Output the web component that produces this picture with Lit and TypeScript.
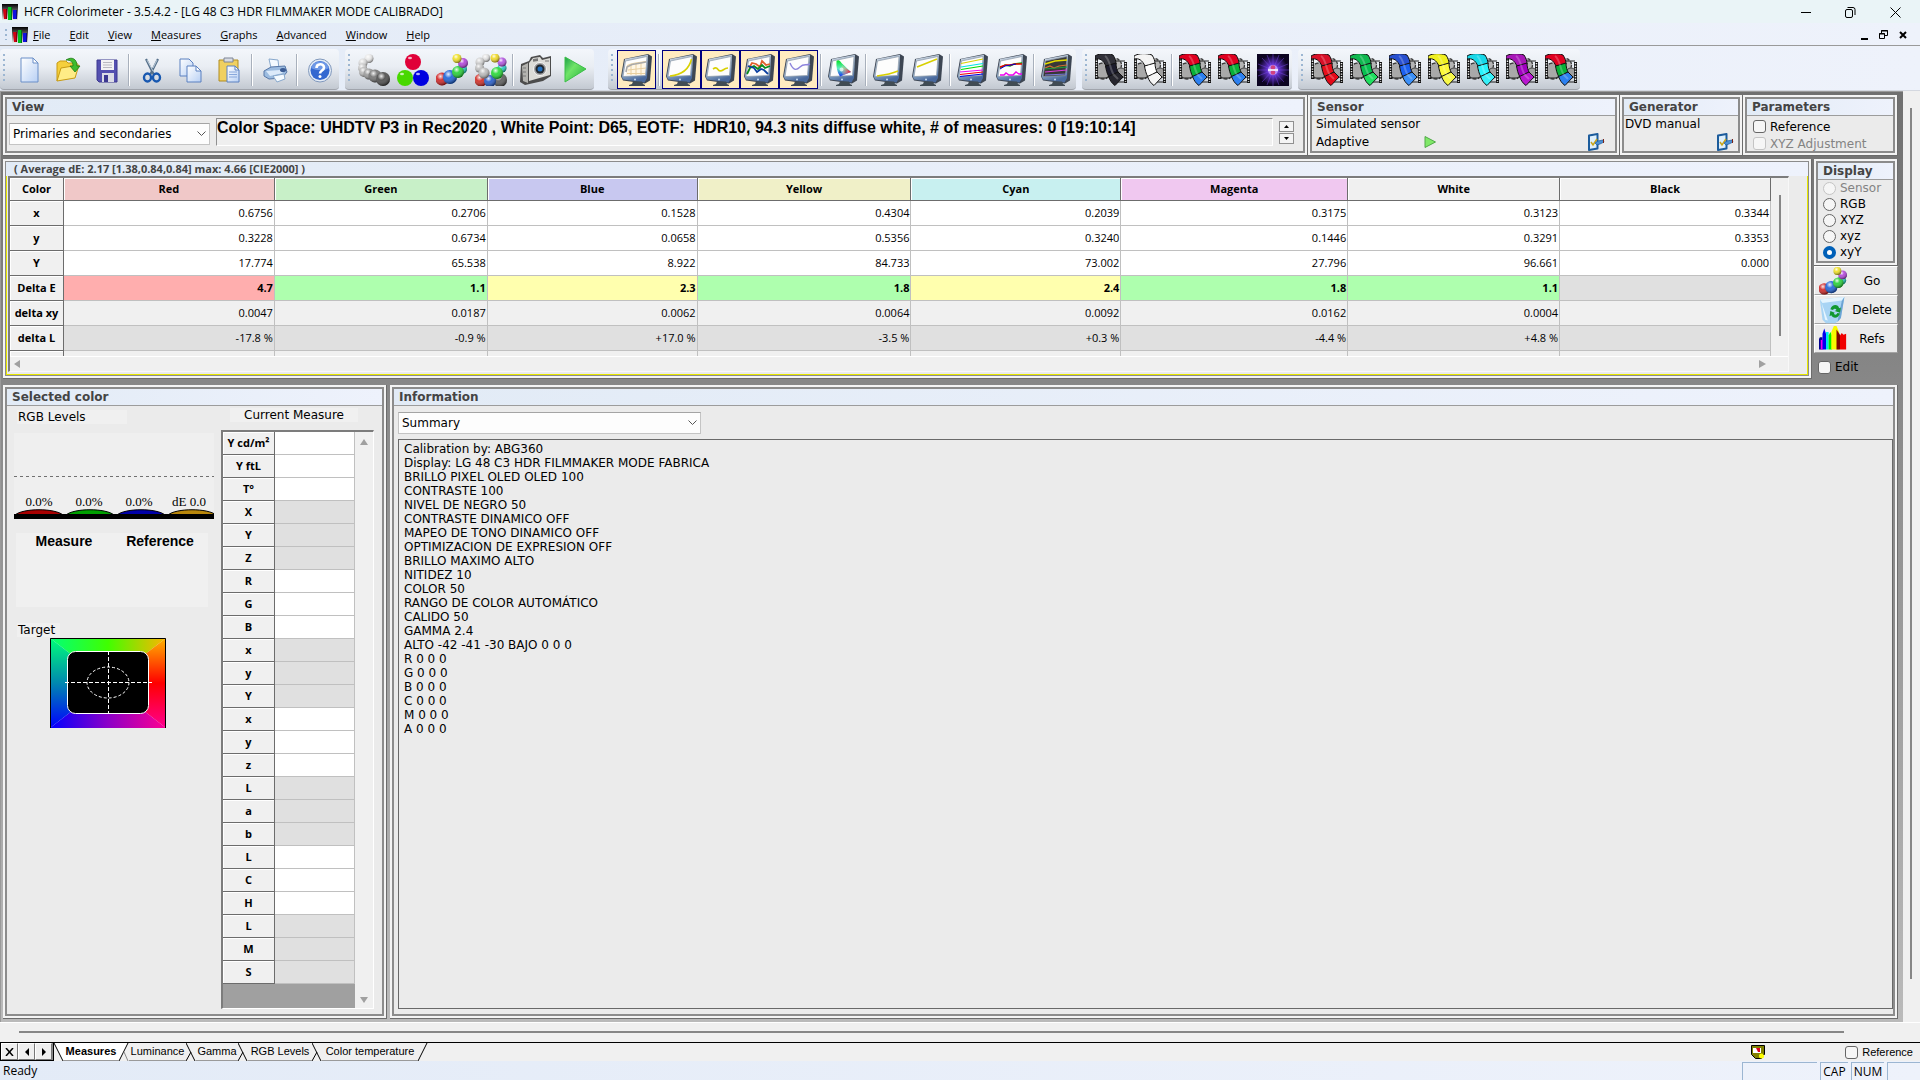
import { LitElement, html, svg, css, nothing } from 'lit';
import type { TemplateResult } from 'lit';
import { customElement, property, state } from 'lit/decorators.js';
import { classMap } from 'lit/directives/class-map.js';

interface Tool {
  id: string;
  label: string;
  active?: boolean;
  sep?: boolean;
}

interface GridColumn {
  name: string;
  tone: string;
  width: number;
  values: string[];
  grade: string;
}

const BANDS: { tools: Tool[]; wide?: boolean }[] = [
  {
    tools: [
      { id: 'new', label: 'New' },
      { id: 'open', label: 'Open' },
      { id: 'save', label: 'Save' },
      { id: 'cut', label: 'Cut', sep: true },
      { id: 'copy', label: 'Copy' },
      { id: 'paste', label: 'Paste' },
      { id: 'print', label: 'Print', sep: true },
      { id: 'help', label: 'About', sep: true },
    ],
  },
  {
    wide: true,
    tools: [
      { id: 'grays', label: 'Measure gray scale' },
      { id: 'primaries', label: 'Measure primaries' },
      { id: 'secondaries', label: 'Measure secondaries' },
      { id: 'ring', label: 'Measure all' },
      { id: 'camera', label: 'Capture', sep: true },
      { id: 'play', label: 'Continuous measures' },
    ],
  },
  {
    tools: [
      { id: 'm-grid', label: 'Measures', active: true },
      { id: 'm-lum', label: 'Luminance', active: true, sep: true },
      { id: 'm-gamma', label: 'Gamma', active: true },
      { id: 'm-rgb', label: 'RGB levels', active: true },
      { id: 'm-temp', label: 'Color temperature', active: true },
      { id: 'm-cie', label: 'CIE chart', sep: true },
      { id: 'm-near0', label: 'Near black', sep: true },
      { id: 'm-near100', label: 'Near white' },
      { id: 'm-sat', label: 'Saturation luminance', sep: true },
      { id: 'm-satshift', label: 'Saturation shift' },
      { id: 'm-free', label: 'Combined measures', sep: true },
    ],
  },
  {
    tools: [
      { id: 'f-black', label: 'Near black pattern' },
      { id: 'f-white', label: 'Near white pattern' },
      { id: 'f-rgb', label: 'Primaries pattern', sep: true },
      { id: 'f-rgb', label: 'Secondaries pattern' },
      { id: 'nova', label: 'Picture pattern' },
    ],
  },
  {
    tools: [
      { id: 'f-red', label: 'Red saturation' },
      { id: 'f-green', label: 'Green saturation' },
      { id: 'f-blue', label: 'Blue saturation' },
      { id: 'f-yellow', label: 'Yellow saturation' },
      { id: 'f-cyan', label: 'Cyan saturation' },
      { id: 'f-magenta', label: 'Magenta saturation' },
      { id: 'f-rgb', label: 'All saturations' },
    ],
  },
];

const MENUS = ['File', 'Edit', 'View', 'Measures', 'Graphs', 'Advanced', 'Window', 'Help'];

const ROWS = ['x', 'y', 'Y', 'Delta E', 'delta xy', 'delta L'];

const COLUMNS: GridColumn[] = [
  { name: 'Red', tone: '#f0c8c8', width: 211, grade: 'bad', values: ['0.6756', '0.3228', '17.774', '4.7', '0.0047', '-17.8 %'] },
  { name: 'Green', tone: '#c8f0c8', width: 213, grade: 'good', values: ['0.2706', '0.6734', '65.538', '1.1', '0.0187', '-0.9 %'] },
  { name: 'Blue', tone: '#c8c8f0', width: 210, grade: 'fair', values: ['0.1528', '0.0658', '8.922', '2.3', '0.0062', '+17.0 %'] },
  { name: 'Yellow', tone: '#f0f0c8', width: 214, grade: 'good', values: ['0.4304', '0.5356', '84.733', '1.8', '0.0064', '-3.5 %'] },
  { name: 'Cyan', tone: '#c8f0f0', width: 210, grade: 'fair', values: ['0.2039', '0.3240', '73.002', '2.4', '0.0092', '+0.3 %'] },
  { name: 'Magenta', tone: '#f0c8f0', width: 227, grade: 'good', values: ['0.3175', '0.1446', '27.796', '1.8', '0.0162', '-4.4 %'] },
  { name: 'White', tone: '#f0f0f0', width: 212, grade: 'good', values: ['0.3123', '0.3291', '96.661', '1.1', '0.0004', '+4.8 %'] },
  { name: 'Black', tone: '#f0f0f0', width: 211, grade: '', values: ['0.3344', '0.3353', '0.000', '', '', ''] },
];
const HEAD_WIDTH = 54;
const TOTAL_WIDTH = COLUMNS.reduce((sum, c) => sum + c.width, HEAD_WIDTH);

const CURRENT = ['Y cd/m²', 'Y ftL', 'T°', 'X', 'Y', 'Z', 'R', 'G', 'B', 'x', 'y', 'Y', 'x', 'y', 'z', 'L', 'a', 'b', 'L', 'C', 'H', 'L', 'M', 'S'];

const SUMMARY = [
  'Calibration by: ABG360',
  'Display: LG 48 C3 HDR FILMMAKER MODE FABRICA',
  'BRILLO PIXEL OLED OLED 100',
  'CONTRASTE 100',
  'NIVEL DE NEGRO 50',
  'CONTRASTE DINAMICO OFF',
  'MAPEO DE TONO DINAMICO OFF',
  'OPTIMIZACION DE EXPRESION OFF',
  'BRILLO MAXIMO ALTO',
  'NITIDEZ 10',
  'COLOR 50',
  'RANGO DE COLOR AUTOMÁTICO',
  'CALIDO 50',
  'GAMMA 2.4',
  'ALTO -42 -41 -30 BAJO 0 0 0',
  'R 0 0 0',
  'G 0 0 0',
  'B 0 0 0',
  'C 0 0 0',
  'M 0 0 0',
  'A 0 0 0',
].join('\n');

const TABS = [
  { name: 'Measures', width: 56 },
  { name: 'Luminance', width: 57 },
  { name: 'Gamma', width: 42 },
  { name: 'RGB Levels', width: 64 },
  { name: 'Color temperature', width: 96 },
];

const ball = (x: number, y: number, r: number, fill: string) => svg`
  <circle cx=${x} cy=${y} r=${r} fill=${fill}></circle>
  <circle cx=${x} cy=${y} r=${r} fill="url(#shine)"></circle>`;

const flat = (x: number, y: number, fill: string) => svg`
  <circle cx=${x} cy=${y} r="8" fill=${fill}></circle>
  <ellipse cx=${x - 3} cy=${y - 4} rx="2" ry="1.3" fill="#fff" opacity=".7"></ellipse>`;

const line = (d: string, stroke: string, width = 1.2) =>
  svg`<path d=${d} fill="none" stroke=${stroke} stroke-width=${width}></path>`;

const monitor = (content: unknown, screen = '#fdfdfd') => svg`
  <path d="M3 5 27 0l4 2.500-2 24-5 3-22-3-2-4z" fill="#3d4653"></path>
  <path d="M4 5 27 .8 26 24l-2.500 4.500L2 25.500.8 22.500z" fill="url(#case)"></path>
  <path d="M4.500 7 26 2.500 24.500 21.500 2 22.500z" fill=${screen} stroke="#8d99a8" stroke-width=".7"></path>
  <path d="M12 27.500h9l1 2.500 2 1v1H8v-1l3-1z" fill="#414c54"></path>
  <circle cx="14" cy="25.500" r="1" fill="#c9dcf0"></circle>
  ${content}`;

const SCREENS: Record<string, () => unknown> = {
  'm-grid': () => svg`
    <path d="M6 10 24 7v14H5z" fill="#fff6e4"></path>
    ${line('M6 12c4-3 10-3 19-4.500M7 16l18-2M6 19.500h18M10 10v11M15 9v12M20 8v13', '#e8cfa0', 1)}
    ${line('M5 18l1-5 5-2.500 6-1 8-1.500', '#a9a9a9', 1.6)}`,
  'm-lum': () => line('M4 22c10-1 19-6 21.500-17', '#d8d000', 1.6),
  'm-gamma': () => line('M8 15c3-2 4-1 5 .5s3 2 5 .5 3-2 5-2', '#d8d000', 1.6),
  'm-rgb': () => svg`
    ${line('M5 14l3-5 4 1 4 3 2-6 4 4 4-1', '#e0602c', 1.8)}
    ${line('M3 20l3-6 4-2 4 3 4-4 3 3 5-2', '#0a8a1c', 1.8)}
    ${line('M4 12l6 2 3 4 4-3 3 1 4 4', '#0b3fa0', 1.8)}`,
  'm-temp': () => line('M7 9c3 7 6 8 10 4s6-1 10-3', '#8d84dc', 1.4),
  'm-cie': () => svg`
    <path d="M8.500 7c2-2 4 0 5 2l9.500 9-11 4.500C9 18 8 12 8.500 7z" fill="url(#cie)"></path>
    <path d="M14 11l9 7-8 3-2-4z" fill="url(#cie-red)"></path>
    <circle cx="13.500" cy="15.500" r="2" fill="#fff" opacity=".7"></circle>`,
  'm-near0': () => line('M4 22c8-1 14-2 21-5', '#d8d000', 1.6),
  'm-near100': () => line('M5 13 25 5', '#d8d000', 1.6),
  'm-sat': () => svg`
    ${line('M4 9.500 26 5', '#d8d000')}${line('M4 13l22-3.500', '#00e4e4')}
    ${line('M4 15.500 26 12', '#00dc00')}${line('M3 18l23-2', '#f000f0')}
    ${line('M3 20.500 26 18', '#f00000')}${line('M3 22.500 26 20', '#0000e0')}`,
  'm-satshift': () => svg`
    ${line('M4 14l5-3 5 1 4-2 8-1', '#00b400', 1.4)}${line('M4 13l6-2 4 0 5-1 7 0', '#e80000', 1.4)}
    ${line('M4 15l5-3 6-1 5-1', '#0000d0', 1)}${line('M4 21l4 0 2-2 3 2 4 0 3-3 3 2 3 0', '#f000f0', 1.4)}`,
  'm-free': () => svg`
    ${line('M4 10l10-3 12-1', '#e4dc00', 1.5)}${line('M4 14l5-2 4 2 5-2 8-1', '#d07030', 1.2)}
    ${line('M4 15l22-2', '#1c9a3c', 1.2)}${line('M4 18l22-2', '#e03ce0', 1.2)}${line('M4 21l22-1', '#7878dc', 1.2)}`,
};

const film = (a: string, b: string, c: string) => svg`
  <circle cx="8" cy="17" r="8" fill="#a9a9a9" stroke="#3a3a3a" stroke-width="1.500" stroke-dasharray="4 1.500"></circle>
  <circle cx="20" cy="11" r="6.500" fill="#b5b5b5" stroke="#3a3a3a" stroke-width="1.300" stroke-dasharray="3 1.500"></circle>
  <circle cx="26" cy="19" r="5" fill="#a0a0a0" stroke="#444"></circle>
  <path d="M1.500 3v22M30.500 8v21" stroke="#111" stroke-width="3"></path>
  <path d="M1.500 4v20M30.500 9v19" stroke="#eee" stroke-width="1.500" stroke-dasharray="1.300 1.300"></path>
  <path d="M3 24h9M22 28h8M20 7h10" stroke="#222" stroke-width="1.200"></path>
  <path d="M0 2C5-1 12-1 18 1c2 3 3 6 3 9L11 12C8 6 5 4 0 5z" fill=${a} stroke="#111" stroke-width="1"></path>
  <path d="M21 9c0 4 1 7 2 9l-9 5c-2-3-3-8-3.500-11z" fill=${b} stroke="#111" stroke-width="1"></path>
  <path d="M23 18l5 5-8 8.500c-3-2-5-5-6.500-9z" fill=${c} stroke="#111" stroke-width="1"></path>
  <path d="M10 2c5 3 5 14 9 19l4 4" fill="none" stroke="#fff" stroke-width="2" opacity=".22"></path>`;

const FILMS: Record<string, [string, string, string]> = {
  'f-black': ['#303038', '#1c1c2c', '#26262e'],
  'f-white': ['#f4f4f4', '#ffffff', '#f4f4f4'],
  'f-rgb': ['#e00020', '#08b038', '#2c80f0'],
  'f-red': ['#d81028', '#e8101c', '#e40818'],
  'f-green': ['#10b850', '#08c050', '#20e060'],
  'f-blue': ['#2850d0', '#1c60f0', '#3c90f8'],
  'f-yellow': ['#f0f020', '#fcf838', '#f8f848'],
  'f-cyan': ['#18d8e8', '#28f4fc', '#38f0f8'],
  'f-magenta': ['#a818b8', '#a000c0', '#b818d0'],
};

const GLYPHS: Record<string, () => unknown> = {
  new: () => svg`
    <path d="M8 4h12l5 5v19H8z" fill="url(#sheet)" stroke="#6a8fc8"></path>
    <path d="M20 4v5h5z" fill="#fff" stroke="#6a8fc8"></path>`,
  open: () => svg`
    <path d="M5 27V9l3-2h6l2 2h9v5" fill="#f5cf3c" stroke="#c79a12"></path>
    <path d="M5 27l4-13 18-3-4 13z" fill="#ffec86" stroke="#c79a12"></path>
    <path d="M14 6c6-4 11-1 11 6h3l-5 6-5-6h3c0-4-2-6-7-6z" fill="#3ebc2e" stroke="#207a18" stroke-width=".8"></path>`,
  save: () => svg`
    <path d="M6 6h20v22H8l-2-2z" fill="#5450b0" stroke="#3c3890"></path>
    <path d="M10 6h13v10H10z" fill="#f2f2f4"></path>
    <path d="M12 8.500h9M12 11h9M12 13.500h9" stroke="#b8b8c0"></path>
    <path d="M11 19h12v9H11z" fill="#dcdce6"></path><path d="M13 21h4v7h-4z" fill="#3c3890"></path>`,
  cut: () => svg`
    <path d="M10 5l8 16M22 5l-8 16" stroke="#56708a" stroke-width="2.200"></path>
    <path d="M11 6l6 11M21 6l-4 8" stroke="#d4e2ee" stroke-width=".8"></path>
    <ellipse cx="11.500" cy="23.500" rx="3.500" ry="4" fill="none" stroke="#1858b0" stroke-width="2.400"></ellipse>
    <ellipse cx="20.500" cy="23.500" rx="3.500" ry="4" fill="none" stroke="#1858b0" stroke-width="2.400"></ellipse>`,
  copy: () => svg`
    <path d="M5 5h9l4 4v13H5z" fill="url(#sheet)" stroke="#5a80c0"></path>
    <path d="M12 12h9l5 5v11H12z" fill="url(#sheet)" stroke="#5a80c0"></path>
    <path d="M21 12v5h5z" fill="#fff" stroke="#5a80c0"></path>`,
  paste: () => svg`
    <path d="M5 6h19v21H5z" fill="#f0d060" stroke="#b08c20"></path>
    <path d="M10 4h9v4h-9z" fill="#d8dce4" stroke="#7c8494"></path>
    <path d="M13 12h8l4 4v12H13z" fill="url(#sheet)" stroke="#5a80c0"></path>
    <path d="M21 12v4h4z" fill="#fff" stroke="#5a80c0"></path>
    <path d="M15 18h8M15 20.500h8M15 23h8" stroke="#88a8dc"></path>`,
  print: () => svg`
    <path d="M10 5l9 1 1 9-8-1z" fill="#f4faff" stroke="#88a8cc"></path>
    <path d="M5 17l7-4 14-1 2 6-5 6-13 1-5-3z" fill="#9cbce0" stroke="#5878a8"></path>
    <path d="M7 17l14-1 3 3-13 3z" fill="#dceafa"></path>
    <path d="M14 22l11-2 1 5-8 3z" fill="#f4faff" stroke="#88a8cc"></path>
    <ellipse cx="24" cy="16" rx="3" ry="2" fill="#3c5c94"></ellipse>`,
  help: () => svg`
    <circle cx="16" cy="16.500" r="11.500" fill="#e4ecf6" stroke="#8098bc"></circle>
    <circle cx="16" cy="16.500" r="9.500" fill="#3468d0"></circle>
    <path d="M7 14a9.500 9.500 0 0 1 18 0c-5 3-12 3-18 0z" fill="#88acf0" opacity=".7"></path>
    <path d="M12.500 14c0-5 7.500-5 7.500-.5 0 3-4 3-4 6" fill="none" stroke="#fff" stroke-width="2.600"></path>
    <circle cx="16" cy="22.500" r="1.500" fill="#fff"></circle>`,
  grays: () => svg`
    ${ball(11, 4.500, 4.500, '#e8e8e8')}${ball(5, 9, 4.500, '#d8d8d8')}${ball(4.500, 14, 4.500, '#c8c8c8')}
    ${ball(6, 18, 5, '#b8b8b8')}${ball(11, 20, 5.500, '#989898')}${ball(17, 22, 6.500, '#707070')}${ball(25, 25, 7, '#484848')}`,
  primaries: () => svg`${flat(16, 8, '#e00038')}${flat(8, 24, '#48d800')}${flat(24, 24, '#0000e0')}`,
  secondaries: () => svg`
    ${ball(6, 25, 6.500, '#d02020')}${ball(14, 23, 7, '#1860d8')}${ball(26, 15, 5, '#20c8c0')}
    ${ball(22, 18, 6, '#20d030')}${ball(27, 9, 5, '#b040d8')}${ball(21, 4.500, 4.500, '#f0e020')}`,
  ring: () => svg`
    ${ball(11, 4, 4, '#e0e0e0')}${ball(5, 8, 4.500, '#d0d0d0')}${ball(4.500, 14, 4.500, '#c0c0c0')}
    ${ball(6, 26, 6.500, '#d02820')}${ball(25, 26, 7, '#585858')}${ball(15, 27, 6, '#2058c8')}
    ${ball(9, 19, 5.500, '#b8b8b8')}${ball(27, 14, 4.500, '#20c8c0')}${ball(22, 19, 6, '#20d830')}
    ${ball(27, 8, 4.500, '#b050e0')}${ball(20, 4, 4.500, '#f0d820')}`,
  camera: () => svg`
    <path d="M1 10 9 7l2-4 9-2 3 3 8-2v20l-8 5-18 4-5-3z" fill="#4c4c4c"></path>
    <path d="M9 9l4-5 7-1 2 3 8-2v17l-21 6z" fill="#dcdcd8"></path>
    <path d="M2 12l6-3v20l-5-2z" fill="#b4b4b0"></path>
    <path d="M13 5l5-.8V7l-5 .8z" fill="#777"></path>
    <circle cx="20" cy="15" r="6.500" fill="#9c9c9c" stroke="#f4f4f4"></circle>
    <circle cx="20" cy="15" r="4.500" fill="#202830"></circle>
    <circle cx="20" cy="15" r="2.500" fill="#2070c0"></circle>
    <path d="M25 7h4M3 14h3M3 18h3M3 22h3" stroke="#777" stroke-width="1.200"></path>`,
  play: () => svg`<path d="M6 3 27 15 6 28z" fill="url(#leaf)" stroke="#3cc048" stroke-width="1"></path>`,
  nova: () => svg`
    <path d="M0 0h32v32H0z" fill="#0c0420"></path>
    <circle cx="16" cy="16" r="15" fill="url(#glow)"></circle>
    <path d="M16 0v32M0 16h32M5 4l22 24M27 4 5 28M10 1l12 30M22 1 10 31M1 10l30 12M31 10 1 22" stroke="#7a48e8" stroke-width=".7" opacity=".7"></path>
    <circle cx="16" cy="16" r="5" fill="#b890ff"></circle>
    <circle cx="16" cy="13.500" r="2.300" fill="#d04080"></circle><circle cx="16" cy="18.500" r="2.300" fill="#d04080"></circle>
    <path d="M11 16h10" stroke="#fff" stroke-width="1.500"></path>`,
  bin: () => svg`
    <path d="M1 4l28-3-4 24-6 6H8l-4-4z" fill="#a8d4f4"></path>
    <path d="M1 4l28-3-3 4-22 3z" fill="#e4f4fe"></path>
    <path d="M3 8l7 20-3-1z" fill="#e8f6ff"></path><path d="M26 6l-5 24 4-5 4-24z" fill="#6ca4d4"></path>
    <path d="M13 15c2-6 9-6 10-1l2-1-1 6-6-2 2-1c-1-2-3-2-4 0zM24 20c-2 6-8 6-10 2l-2 1 1-6 5 2-1 1c1 2 3 2 4-.500z" fill="#109830"></path>`,
  refs: () => svg`
    <path d="M0 28V16l1-2h3v14z" fill="#000090"></path><path d="M2 28V17h3v11z" fill="#f000f0"></path>
    <path d="M4 28V10l2-6 2 6v18z" fill="#0000f0"></path><path d="M8 28V8h3v20z" fill="#00e8f0"></path>
    <path d="M11 28V12l2-4 2 4v16z" fill="#00f000"></path><path d="M14 28V8l3-7h3l3 7v20z" fill="#f8f800"></path>
    <path d="M20 28V5l4 6v17z" fill="#800000"></path><path d="M24 28V12l2-3 2 2 3-1v18z" fill="#f00000"></path>`,
};

const icon = (id: string): TemplateResult => {
  let body: unknown;
  if (FILMS[id]) body = film(...FILMS[id]);
  else if (SCREENS[id]) body = monitor(SCREENS[id](), id === 'm-free' ? '#383838' : '#fdfdfd');
  else body = GLYPHS[id]?.() ?? nothing;
  return html`<svg viewBox="0 0 32 32" width="32" height="32" aria-hidden="true">${body}</svg>`;
};

const logo = html`
  <svg viewBox="0 0 16 16" width="16" height="16" aria-hidden="true">
    <path d="M0 0h16v16H0z" fill="url(#fade)"></path>
    <path d="M1 5h4v10H2z" fill="#d00010"></path><path d="M6 3h4v13H6z" fill="#00c020"></path><path d="M11 6h4v9h-4z" fill="#1010e0"></path>
    <path d="M4 5h1v10H4zM9 3h1v13H9zM14 6h1v9h-1z" fill="#000" opacity=".4"></path>
  </svg>`;

const settingsGlyph = html`
  <svg viewBox="0 0 18 18" width="18" height="18" aria-hidden="true">
    <path d="M2 2.500 10.500 1v14.500L2 17z" fill="#dff0fc" stroke="#1c5c9c" stroke-width="2" stroke-linejoin="round"></path>
    <path d="M4 9l2 3 4-6" fill="none" stroke="#c8a418" stroke-width="1.500"></path>
    <path d="M8 10l3-2 5-1 1 2-4 2-3 1z" fill="#4c90d4" stroke="#1c5c9c" stroke-width=".7"></path>
    <path d="M16 6h1v4h-1z" fill="#7c2418"></path>
  </svg>`;

@customElement('hcfr-panel')
class HcfrPanel extends LitElement {
  static styles = css`
    :host {
      display: flex;
      box-sizing: border-box;
      padding: 2px;
      background: #f4f4f4;
      border-right: 1px solid #6c6c6c;
      border-bottom: 1px solid #6c6c6c;
      min-width: 0;
    }
    .frame {
      flex: 1;
      min-width: 0;
      display: flex;
      flex-direction: column;
      border: 2px solid #8c8c8c;
      background: #ebebeb;
    }
    .title {
      height: 16px;
      padding-left: 5px;
      white-space: nowrap;
      font: bold 12px/16px 'DejaVu Sans', sans-serif;
      color: #444;
      background: linear-gradient(90deg, #e2ebf6, #eef2fc);
      border-bottom: 1px solid #9c9c9c;
    }
    .body {
      flex: 1;
      min-height: 0;
      display: flex;
      flex-direction: column;
    }
    .lit {
      border-width: 1px;
    }
    .lit .title {
      font: bold 11px/14px 'Open Sans', sans-serif;
      padding-left: 8px;
      border-bottom: 0;
      height: 14px;
    }
    .lit .body {
      border: 1px solid #e6e600;
      border-top: 0;
    }
  `;

  @property() heading = '';
  @property({ type: Boolean }) highlight = false;

  render() {
    return html`
      <section class=${classMap({ frame: true, lit: this.highlight })}>
        <div class="title">${this.heading}</div>
        <div class="body"><slot></slot></div>
      </section>
    `;
  }
}

@customElement('app-root')
class AppRoot extends LitElement {
  static styles = css`
    :host {
      display: flex;
      flex-direction: column;
      height: 100vh;
      min-height: 700px;
      box-sizing: border-box;
      overflow: hidden;
      background: #eef2fb;
      color: #000;
      font: 12px/14px 'DejaVu Sans', sans-serif;
    }
    * {
      box-sizing: border-box;
    }
    button, select, textarea, input {
      font: inherit;
      color: inherit;
      margin: 0;
      padding: 0;
      border: 0;
      border-radius: 0;
      background: none;
    }
    button, select {
      appearance: none;
      white-space: nowrap;
    }
    svg {
      display: block;
      flex: none;
    }
    .defs {
      position: absolute;
    }

    .titlebar {
      display: flex;
      align-items: center;
      gap: 6px;
      height: 23px;
      flex: none;
      padding: 1px 5px 0 2px;
      background: #eaf4f7;
      font: 12px/16px 'Open Sans', sans-serif;
    }
    .titlebar .name {
      flex: 1;
    }
    .titlebar button, .menubar .child {
      display: flex;
      align-items: center;
      justify-content: center;
    }
    .titlebar button {
      width: 39px;
      height: 20px;
    }
    .menubar {
      display: flex;
      align-items: center;
      height: 23px;
      flex: none;
      padding: 1px 8px 0 5px;
      border-bottom: 1px solid #9a9a9a;
      background: linear-gradient(90deg, #e3ebf7, #eef2fb);
      font: 11px/16px 'Open Sans', sans-serif;
    }
    .menubar nav {
      flex: 1;
      display: flex;
      gap: 19px;
      padding-left: 5px;
    }
    .menubar .child {
      width: 19px;
      height: 18px;
    }
    .grip {
      width: 2px;
      align-self: stretch;
      flex: none;
      background: repeating-linear-gradient(#9cb6d2 0 2px, transparent 2px 5px);
    }
    .menubar .grip {
      margin: 5px 5px 5px 0;
    }

    .toolbars {
      display: flex;
      gap: 6px;
      height: 45px;
      flex: none;
      padding-top: 3px;
      border-bottom: 1px solid #d4d8e0;
      background: linear-gradient(90deg, #e3ebf7, #eef2fb);
    }
    .band {
      display: flex;
      align-items: center;
      padding: 1px 0 0 3px;
      border-radius: 4px;
      border-bottom: 1px solid #a0a4ac;
      background: linear-gradient(#f3f6fb, #e9edf3 45%, #c3c9d2);
    }
    .band.wide {
      margin-right: 8px;
    }
    .band .grip {
      margin: 4px 4px 5px 0;
    }
    .tool {
      display: flex;
      align-items: center;
      justify-content: center;
      width: 39px;
      height: 39px;
    }
    .tool.active {
      background: #ffebc0;
      border: 1px solid #000080;
    }
    .sep {
      width: 2px;
      height: 32px;
      margin: 0 2px;
      border-left: 1px solid #a8b0bc;
      border-right: 1px solid #fff;
    }

    .workspace {
      display: flex;
      flex: 1;
      min-height: 0;
    }
    .view {
      flex: 1;
      min-width: 0;
      display: flex;
      flex-direction: column;
      padding: 3px 5px 3px 2px;
      border-top: 1px solid #9a9a9a;
      border-left: 1px solid #9a9a9a;
      background: linear-gradient(#707070, #bababa);
    }
    .vscroll {
      width: 17px;
      padding: 17px 7px 43px;
      background: #f0f0f0;
    }
    .vscroll div {
      width: 2px;
      height: 100%;
      background: #868686;
    }
    .row {
      display: flex;
    }
    .top {
      height: 61px;
      flex: none;
      margin-bottom: 3px;
    }
    .middle {
      height: 220px;
      flex: none;
      gap: 2px;
      margin-bottom: 6px;
    }
    .bottom {
      flex: 1;
      gap: 3px;
      min-height: 0;
    }
    .grow {
      flex: 1;
    }
    .sensor {
      width: 312px;
    }
    .generator {
      width: 123px;
    }
    .parameters {
      width: 155px;
    }

    .combo {
      position: relative;
      display: block;
      height: 22px;
    }
    .combo select {
      width: 100%;
      height: 22px;
      padding-left: 3px;
      background: #fdfdfd;
      border: 1px solid #c4c4c4;
      border-top-color: #a4a4a4;
    }
    .combo svg {
      position: absolute;
      right: 4px;
      top: 8px;
      pointer-events: none;
    }
    .viewbar {
      display: flex;
      padding: 2px 9px 0 2px;
      gap: 6px;
    }
    .viewbar .combo {
      width: 201px;
      margin-top: 5px;
    }
    .status-text {
      flex: 1;
      height: 28px;
      resize: none;
      overflow: hidden;
      border: 1px solid #fff;
      border-top-color: #909090;
      border-left-color: #909090;
      background: #efefef;
      font: bold 16px/18px 'Liberation Sans', Arial, sans-serif;
    }
    .spin {
      display: flex;
      flex-direction: column;
      gap: 1px;
      margin-top: 3px;
    }
    .spin button {
      width: 15px;
      height: 11px;
      display: flex;
      align-items: center;
      justify-content: center;
      border: 1px solid #909090;
      background: #f4f4f4;
    }
    .lines {
      display: grid;
      grid-template-columns: 1fr auto;
      padding: 0 10px 0 4px;
      line-height: 17px;
    }
    .generator .lines {
      padding: 0 4px 0 1px;
    }
    .lines .mode {
      display: flex;
      align-items: center;
      gap: 55px;
    }
    .check {
      display: flex;
      align-items: center;
      gap: 4px;
    }
    .check input {
      appearance: none;
      flex: none;
      width: 13px;
      height: 13px;
      border: 1px solid #666;
      border-radius: 3px;
      background: #f6f6f6;
    }
    .check input[type='radio'] {
      border-radius: 50%;
    }
    .check input[type='radio']:checked {
      border: 4px solid #0060b8;
      background: #fff;
    }
    .off {
      color: #838383;
    }
    .off input {
      border-color: #c4c4c4;
    }
    .options {
      padding: 2px 0 0 6px;
    }
    .options .check {
      height: 17px;
    }
    .modes {
      padding-left: 5px;
    }
    .modes .check {
      height: 16px;
    }

    .measures {
      flex: 1;
      margin: 0 18px 2px 1px;
      display: flex;
      flex-direction: column;
      border: 1px solid #f8f8f8;
      border-top: 2px solid #7c7c7c;
      border-left: 2px solid #7c7c7c;
      background: #f0f0f0;
      min-height: 0;
    }
    .gridrow {
      display: flex;
      align-items: flex-start;
      height: 178px;
      overflow: hidden;
    }
    table {
      border-collapse: separate;
      border-spacing: 0;
      table-layout: fixed;
    }
    .gridrow table {
      flex: 1;
      min-width: 0;
    }
    .rail {
      width: 17px;
      height: 178px;
      padding: 17px 7px 20px 8px;
      flex: none;
    }
    .rail div {
      width: 2px;
      height: 100%;
      background: #868686;
    }
    th {
      background: #f0f0f0;
      font: bold 11px/16px 'Open Sans', sans-serif;
      padding: 0;
      border-right: 1px solid #6c6c6c;
      border-bottom: 1px solid #6c6c6c;
      box-shadow: inset 1px 1px #fff;
    }
    td {
      padding: 0 1px 0 0;
      text-align: right;
      font: 11px/16px 'Open Sans', sans-serif;
      background: #fff;
      border-right: 1px solid #c0c0c0;
      border-bottom: 1px solid #c0c0c0;
    }
    .gridrow tr {
      height: 25px;
    }
    .gridrow thead tr {
      height: 23px;
    }
    tr.mark td {
      font-weight: bold;
    }
    td.bad { background: #ffaeae; }
    td.good { background: #aeffae; }
    td.fair { background: #ffffae; }
    tr.soft td { background: #f0f0f0; }
    tr.dim td, td.none, .current td.dim { background: #e0e0e0; }
    .hscroll {
      flex: 1;
      display: flex;
      align-items: center;
      justify-content: space-between;
      padding: 0 22px 0 4px;
      border-top: 1px solid #fff;
    }

    .side {
      width: 84px;
      flex: none;
      display: flex;
      flex-direction: column;
    }
    .side hcfr-panel {
      height: 107px;
      flex: none;
    }
    .action {
      display: flex;
      align-items: center;
      height: 29px;
      padding-left: 4px;
      background: #ebebeb;
      border: 1px solid #fff;
      border-right-color: #8c8c8c;
      border-bottom-color: #a4a4a4;
    }
    .action span {
      flex: 1;
      text-align: center;
    }
    .side .edit {
      padding: 7px 0 0 4px;
    }

    .selected {
      width: 384px;
      flex: none;
    }
    .info {
      flex: 1;
    }
    .selbody {
      flex: 1;
      min-height: 0;
      display: flex;
      gap: 7px;
      padding: 2px 8px 5px 7px;
    }
    .left {
      width: 200px;
    }
    .tag {
      background: #f0f0f0;
      height: 14px;
      margin-left: 3px;
      padding-left: 1px;
    }
    .tag.levels {
      width: 110px;
      margin-top: 2px;
      margin-bottom: 9px;
    }
    .tag.target {
      width: 43px;
      margin-top: 16px;
      margin-bottom: 1px;
    }
    .swatches {
      display: grid;
      grid-template-columns: 1fr 1fr;
      text-align: center;
      height: 74px;
      width: 192px;
      margin: 14px 2px 0;
      background: #f0f0f0;
      font: bold 14px/16px 'Liberation Sans', Arial, sans-serif;
    }
    .levelbox {
      height: 86px;
      background: #efefef;
      display: flex;
      flex-direction: column;
      justify-content: flex-end;
    }
    .guide {
      height: 1px;
      margin-bottom: 18px;
      background: repeating-linear-gradient(90deg, #707070 0 3px, transparent 3px 6px);
    }
    .percents {
      display: grid;
      grid-template-columns: repeat(4, 1fr);
      margin-bottom: 1px;
      text-align: center;
      font: 13px/13px 'Liberation Serif', serif;
    }
    .gamut {
      margin-left: 36px;
    }
    .right {
      flex: 1;
      min-height: 0;
      display: flex;
      flex-direction: column;
    }
    .right .caption {
      width: 128px;
      height: 14px;
      margin: 0 0 8px 9px;
      text-align: center;
      background: #f0f0f0;
    }
    .current {
      flex: 1;
      min-height: 0;
      display: flex;
      border: 1px solid #fff;
      border-top: 2px solid #7c7c7c;
      border-left: 2px solid #7c7c7c;
      background: #a0a0a0;
    }
    .current table {
      width: 132px;
      height: 552px;
      flex: none;
    }
    .current tr {
      height: 23px;
    }
    .current th {
      width: 52px;
    }
    .current .arrows {
      flex: 1;
      display: flex;
      flex-direction: column;
      align-items: center;
      justify-content: space-between;
      padding: 7px 0 5px;
      background: #f0f0f0;
    }

    .infobody {
      flex: 1;
      display: flex;
      flex-direction: column;
      gap: 5px;
      padding: 6px 0 5px 4px;
    }
    .infobody .combo {
      width: 303px;
    }
    .infobody textarea {
      flex: 1;
      resize: none;
      padding: 2px 5px;
      border: 1px solid #696969;
      background: #ebebeb;
    }

    .hbar {
      height: 20px;
      flex: none;
      padding: 8px 76px 0 19px;
      background: #f0f0f0;
      border-top: 1px solid #fff;
    }
    .hbar div {
      height: 2px;
      background: #868686;
    }
    .tabs {
      height: 19px;
      flex: none;
      display: flex;
      border-top: 1px solid #000;
      background: #f0f0f0;
      font: 11px/17px 'Liberation Sans', Arial, sans-serif;
    }
    .navs {
      display: flex;
      padding-right: 1px;
      border: 1px solid #000;
      border-top: 0;
      background: #888;
    }
    .navs button {
      width: 17px;
      display: flex;
      align-items: center;
      justify-content: center;
      background: #efefef;
      border: 1px solid #fff;
      border-right-color: #777;
      border-bottom-color: #777;
    }
    .tab {
      border-bottom: 1px solid #9a9a9a;
    }
    .tab.current-tab {
      font-weight: bold;
      background: #fff;
    }
    .tabs .grow {
      display: flex;
      justify-content: flex-end;
      align-items: center;
      gap: 80px;
      padding-right: 7px;
    }
    .statusbar {
      display: flex;
      align-items: stretch;
      gap: 3px;
      height: 19px;
      flex: none;
      padding: 1px 0 0 3px;
      background: linear-gradient(90deg, #e3ebf7, #eef2fb);
      font: 12px/18px 'Open Sans', sans-serif;
    }
    .pane {
      border-left: 1px solid #9cb6d2;
      border-top: 1px solid #9cb6d2;
      text-align: center;
      line-height: 17px;
      width: 33px;
    }
    .pane.long {
      width: 75px;
    }
    .pane.short {
      width: 28px;
    }
  `;

  @state() private _display = 'xyY';
  @state() private _tab = 'Measures';

  render() {
    return html`
      ${this._defs()}
      <header class="titlebar">
        ${logo}
        <span class="name">HCFR Colorimeter - 3.5.4.2 - [LG 48 C3 HDR FILMMAKER MODE CALIBRADO]</span>
        <button aria-label="Minimize"><svg width="10" height="10"><path d="M0 5.500h10" stroke="#000"></path></svg></button>
        <button aria-label="Restore"><svg width="11" height="11" fill="none" stroke="#000"><rect x=".5" y="2.500" width="7" height="8" rx="1.500"></rect><path d="M2.500.5h5.500q2 0 2 2V8"></path></svg></button>
        <button aria-label="Close"><svg width="11" height="11"><path d="M.5.5l10 10M10.500.5l-10 10" stroke="#000"></path></svg></button>
      </header>
      <div class="menubar">
        <span class="grip"></span>
        ${logo}
        <nav>${MENUS.map(m => html`<button><u>${m[0]}</u>${m.slice(1)}</button>`)}</nav>
        <button class="child" aria-label="Minimize document"><svg width="8" height="10"><path d="M0 9h7" stroke="#000" stroke-width="2"></path></svg></button>
        <button class="child" aria-label="Restore document"><svg width="9" height="9" fill="none" stroke="#000"><path d="M2.500 3V.5h6v5H6M2 1h7M0 4h6"></path><path d="M.5 3.500h5v5h-5z"></path></svg></button>
        <button class="child" aria-label="Close document"><svg width="8" height="8"><path d="M1 1l6 6M7 1 1 7" stroke="#000" stroke-width="2"></path></svg></button>
      </div>
      <div class="toolbars">
        ${BANDS.map(band => html`
          <div class=${classMap({ band: true, wide: !!band.wide })}>
            <span class="grip"></span>
            ${band.tools.map(t => html`
              ${t.sep ? html`<span class="sep"></span>` : nothing}
              <button class=${classMap({ tool: true, active: !!t.active })} aria-label=${t.label}>${icon(t.id)}</button>
            `)}
          </div>
        `)}
      </div>
      <main class="workspace">
        <div class="view">
          ${this._renderTop()}
          ${this._renderMiddle()}
          <div class="row bottom">
            ${this._renderSelected()}
            <hcfr-panel class="info" heading="Information">
              <div class="infobody">
                ${this._combo('Information page', 'Summary')}
                <textarea aria-label="Summary" readonly .value=${SUMMARY}></textarea>
              </div>
            </hcfr-panel>
          </div>
        </div>
        <div class="vscroll"><div></div></div>
      </main>
      <div class="hbar"><div></div></div>
      ${this._renderTabs()}
      <footer class="statusbar">
        <span class="grow">Ready</span>
        <span class="pane long"></span>
        <span class="pane short">CAP</span>
        <span class="pane">NUM</span>
        <span class="pane"></span>
      </footer>
    `;
  }

  private _defs() {
    return html`
      <svg class="defs" width="0" height="0" aria-hidden="true">
        <defs>
          <radialGradient id="shine" cx=".38" cy=".3" r=".7">
            <stop offset="0" stop-color="#fff" stop-opacity=".9"></stop>
            <stop offset=".4" stop-color="#fff" stop-opacity=".1"></stop>
            <stop offset="1" stop-color="#000" stop-opacity=".5"></stop>
          </radialGradient>
          <radialGradient id="glow">
            <stop offset="0" stop-color="#e0c8ff"></stop>
            <stop offset=".4" stop-color="#6030c8"></stop>
            <stop offset="1" stop-color="#0c0420"></stop>
          </radialGradient>
          <linearGradient id="case" x1="0" y1="0" x2=".3" y2="1">
            <stop offset="0" stop-color="#d4dae2"></stop>
            <stop offset=".7" stop-color="#88a4c4"></stop>
            <stop offset="1" stop-color="#48689c"></stop>
          </linearGradient>
          <linearGradient id="cie" x1="0" y1="0" x2="0" y2="1">
            <stop offset="0" stop-color="#00e020"></stop>
            <stop offset=".5" stop-color="#60f0c0"></stop>
            <stop offset="1" stop-color="#1830f0"></stop>
          </linearGradient>
          <linearGradient id="cie-red">
            <stop offset="0" stop-color="#ffe0a0" stop-opacity=".2"></stop>
            <stop offset="1" stop-color="#f00020"></stop>
          </linearGradient>
          <linearGradient id="sheet" x1="0" y1="0" x2="1" y2="1">
            <stop offset="0" stop-color="#fff"></stop>
            <stop offset="1" stop-color="#b8d0f4"></stop>
          </linearGradient>
          <linearGradient id="leaf" x1="0" y1="0" x2="1" y2="1">
            <stop offset="0" stop-color="#1ca048"></stop>
            <stop offset=".4" stop-color="#70e468"></stop>
            <stop offset="1" stop-color="#20b038"></stop>
          </linearGradient>
          <linearGradient id="fade" x1="0" y1="0" x2="0" y2="1">
            <stop offset="0" stop-color="#000"></stop>
            <stop offset="1" stop-color="#e8e8e8"></stop>
          </linearGradient>
        </defs>
      </svg>
    `;
  }

  private _combo(label: string, value: string) {
    return html`
      <label class="combo">
        <select aria-label=${label}><option>${value}</option></select>
        <svg width="9" height="6"><path d="M.5 .5l4 4 4-4" fill="none" stroke="#555"></path></svg>
      </label>
    `;
  }

  private _renderTop() {
    return html`
      <div class="row top">
        <hcfr-panel class="grow" heading="View">
          <div class="viewbar">
            ${this._combo('View', 'Primaries and secondaries')}
            <textarea class="status-text" aria-label="Measure settings" readonly
              .value=${'Color Space: UHDTV P3 in Rec2020 , White Point: D65, EOTF:  HDR10, 94.3 nits diffuse white, # of measures: 0 [19:10:14]'}></textarea>
            <div class="spin">
              <button aria-label="Scroll up"><svg width="5" height="3"><path d="M0 3h5L2.500 0z"></path></svg></button>
              <button aria-label="Scroll down"><svg width="5" height="3"><path d="M0 0h5L2.500 3z"></path></svg></button>
            </div>
          </div>
        </hcfr-panel>
        <hcfr-panel class="sensor" heading="Sensor">
          <div class="lines">
            <span>Simulated sensor</span><span></span>
            <span class="mode">Adaptive
              <svg width="12" height="12"><path d="M1 0.500 11.500 6 1 11.500z" fill="#80e868" stroke="#50a848"></path></svg>
            </span>
            <button aria-label="Configure sensor">${settingsGlyph}</button>
          </div>
        </hcfr-panel>
        <hcfr-panel class="generator" heading="Generator">
          <div class="lines">
            <span>DVD manual</span><span></span>
            <span></span>
            <button aria-label="Configure generator">${settingsGlyph}</button>
          </div>
        </hcfr-panel>
        <hcfr-panel class="parameters" heading="Parameters">
          <div class="options">
            <label class="check"><input type="checkbox" />Reference</label>
            <label class="check off"><input type="checkbox" disabled />XYZ Adjustment</label>
          </div>
        </hcfr-panel>
      </div>
    `;
  }

  private _renderMiddle() {
    const pct = (w: number) => `width: ${(w / TOTAL_WIDTH) * 100}%`;
    return html`
      <div class="row middle">
        <hcfr-panel class="grow" highlight heading="( Average dE: 2.17 [1.38,0.84,0.84] max: 4.66 [CIE2000] )">
          <div class="measures">
            <div class="gridrow">
              <table>
                <colgroup>
                  <col style=${pct(HEAD_WIDTH)} />
                  ${COLUMNS.map(c => html`<col style=${pct(c.width)} />`)}
                </colgroup>
                <thead>
                  <tr>
                    <th>Color</th>
                    ${COLUMNS.map(c => html`<th style=${`background: ${c.tone}`}>${c.name}</th>`)}
                  </tr>
                </thead>
                <tbody>
                  ${ROWS.map((r, i) => html`
                    <tr class=${classMap({ mark: i === 3, soft: i === 4, dim: i === 5 })}>
                      <th>${r}</th>
                      ${COLUMNS.map(c => html`<td class=${i === 3 ? c.grade || 'none' : ''}>${c.values[i]}</td>`)}
                    </tr>
                  `)}
                  <tr class="soft"><th></th>${COLUMNS.map(() => html`<td></td>`)}</tr>
                </tbody>
              </table>
              <div class="rail"><div></div></div>
            </div>
            <div class="hscroll">
              <svg width="6" height="8"><path d="M6 0v8L0 4z" fill="#a0a0a0"></path></svg>
              <svg width="7" height="8"><path d="M0 0v8l7-4z" fill="#a0a0a0"></path></svg>
            </div>
          </div>
        </hcfr-panel>
        <div class="side">
          <hcfr-panel heading="Display">
            <div class="modes">
              ${['Sensor', 'RGB', 'XYZ', 'xyz', 'xyY'].map(d => html`
                <label class=${classMap({ check: true, off: d === 'Sensor' })}>
                  <input type="radio" name="display" .checked=${this._display === d} ?disabled=${d === 'Sensor'}
                         @change=${() => (this._display = d)} />${d}
                </label>
              `)}
            </div>
          </hcfr-panel>
          <button class="action">${this._small('secondaries')}<span>Go</span></button>
          <button class="action">${this._small('bin')}<span>Delete</span></button>
          <button class="action">${this._small('refs')}<span>Refs</span></button>
          <label class="check edit"><input type="checkbox" />Edit</label>
        </div>
      </div>
    `;
  }

  private _small(id: string) {
    return html`<svg viewBox="0 0 32 32" width="28" height="28" aria-hidden="true">${GLYPHS[id]()}</svg>`;
  }

  private _renderSelected() {
    const bumps = ['#a80000', '#00a000', '#0000a8', '#b8860b'];
    return html`
      <hcfr-panel class="selected" heading="Selected color">
        <div class="selbody">
          <div class="left">
            <div class="tag levels">RGB Levels</div>
            <div class="levelbox">
              <div class="guide"></div>
              <div class="percents"><span>0.0%</span><span>0.0%</span><span>0.0%</span><span>dE 0.0</span></div>
              <svg width="200" height="10" viewBox="0 0 200 10">
                ${bumps.map((c, i) => svg`<path d=${`M${i * 51 + 1} 6c8-7 40-7 48 0z`} fill=${c} stroke="#000"></path>`)}
                <path d="M0 5h200v5H0z"></path>
              </svg>
            </div>
            <div class="swatches"><span>Measure</span><span>Reference</span></div>
            <div class="tag target">Target</div>
            ${this._gamut()}
          </div>
          <div class="right">
            <div class="caption">Current Measure</div>
            <div class="current">
              <table>
                <tbody>
                  ${CURRENT.map((c, i) => html`<tr><th>${c}</th><td class=${Math.floor(i / 3) % 2 ? 'dim' : ''}></td></tr>`)}
                </tbody>
              </table>
              <div class="arrows">
                <svg width="8" height="6"><path d="M4 0l4 6H0z" fill="#a0a0a0"></path></svg>
                <svg width="8" height="6"><path d="M4 6l4-6H0z" fill="#a0a0a0"></path></svg>
              </div>
            </div>
          </div>
        </div>
      </hcfr-panel>
    `;
  }

  private _gamut() {
    return html`
      <svg class="gamut" width="116" height="90" viewBox="0 0 116 90">
        <defs>
          <linearGradient id="g-top"><stop offset="0" stop-color="#00ff78"></stop><stop offset=".5" stop-color="#40ff00"></stop><stop offset="1" stop-color="#ffb400"></stop></linearGradient>
          <linearGradient id="g-right" x2="0" y2="1"><stop offset="0" stop-color="#ffb400"></stop><stop offset=".5" stop-color="#ff0000"></stop><stop offset="1" stop-color="#ff0090"></stop></linearGradient>
          <linearGradient id="g-bottom"><stop offset="0" stop-color="#0000ff"></stop><stop offset=".5" stop-color="#8c00c8"></stop><stop offset="1" stop-color="#ff0090"></stop></linearGradient>
          <linearGradient id="g-left" x2="0" y2="1"><stop offset="0" stop-color="#00ff78"></stop><stop offset=".5" stop-color="#0088b0"></stop><stop offset="1" stop-color="#0000ff"></stop></linearGradient>
        </defs>
        <path d="M0 0h116L58 45z" fill="url(#g-top)"></path>
        <path d="M116 0v90L58 45z" fill="url(#g-right)"></path>
        <path d="M0 90h116L58 45z" fill="url(#g-bottom)"></path>
        <path d="M0 0v90l58-45z" fill="url(#g-left)"></path>
        <path d="M.5 90V.5h115V90" fill="none" stroke="#000"></path>
        <rect x="17.500" y="13.500" width="81" height="62" rx="8" stroke="#fff"></rect>
        <path d="M15 44.500h87M58.500 13v63" stroke="#fff" stroke-dasharray="4 2"></path>
        <ellipse cx="58" cy="44.500" rx="21" ry="15.500" fill="none" stroke="#fff" stroke-dasharray="3 2"></ellipse>
      </svg>
    `;
  }

  private _renderTabs() {
    const last = TABS.length - 1;
    return html`
      <div class="tabs">
        <div class="navs">
          <button aria-label="Close"><svg width="9" height="8"><path d="M1 0l7 8M8 0 1 8" stroke="#000" stroke-width="1.500"></path></svg></button>
          <button aria-label="Previous"><svg width="4" height="8"><path d="M4 0v8L0 4z"></path></svg></button>
          <button aria-label="Next"><svg width="4" height="8"><path d="M0 0v8l4-4z"></path></svg></button>
        </div>
        <svg width="9" height="18"><path d="M0 0h9v18z" fill="#fff"></path><path d="M0 0l9 18" stroke="#000"></path></svg>
        ${TABS.map((t, i) => html`
          <button class=${classMap({ tab: true, 'current-tab': t.name === this._tab })} style=${`width: ${t.width}px`}
                  @click=${() => (this._tab = t.name)}>${t.name}</button>
          ${i === 0
            ? html`<svg width="10" height="18"><path d="M0 0h9L0 18z" fill="#fff"></path><path d="M9 0 0 18" stroke="#000"></path><path d="M5 9l4 9" stroke="#888"></path></svg>`
            : i === last
              ? html`<svg width="10" height="18"><path d="M9 0 0 18" stroke="#000"></path></svg>`
              : html`<svg width="10" height="18"><path d="M0 0l9 18M5 9 0 18" stroke="#000" fill="none"></path></svg>`}
        `)}
        <div class="grow">
          <svg width="14" height="14" aria-hidden="true">
            <path d="M.5.500h13v9h-3v4h-6l-4-4z" fill="#808000" stroke="#000"></path>
            <path d="M2 3h8v5H2z" fill="#fff"></path><path d="M5 3h4v4H7z" fill="#e00020"></path>
            <circle cx="10.500" cy="11" r="2.500" fill="#ffff00"></circle>
          </svg>
          <label class="check"><input type="checkbox" />Reference</label>
        </div>
      </div>
    `;
  }
}
